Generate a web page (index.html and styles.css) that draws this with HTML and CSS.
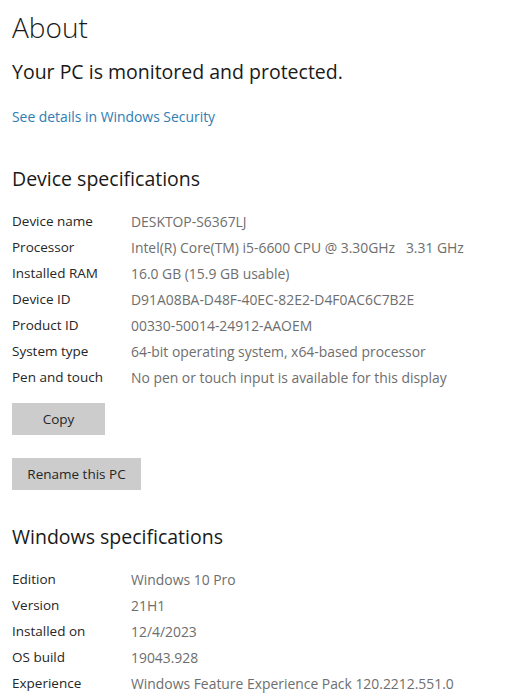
FILE: index.html
```html
<!DOCTYPE html>
<html>
<head>
<meta charset="utf-8">
<link rel="stylesheet" href="styles.css">
</head>
<body>
<main class="page">
  <h1 class="title">About</h1>
  <p class="status">Your PC is monitored and protected.</p>
  <a class="link" href="#">See details in Windows Security</a>

  <h2 class="section">Device specifications</h2>
  <dl class="specs">
    <div class="row"><dt>Device name</dt><dd>DESKTOP-S6367LJ</dd></div>
    <div class="row"><dt>Processor</dt><dd>Intel(R) Core(TM) i5-6600 CPU @ 3.30GHz&nbsp;&nbsp;&nbsp;3.31 GHz</dd></div>
    <div class="row"><dt>Installed RAM</dt><dd>16.0 GB (15.9 GB usable)</dd></div>
    <div class="row"><dt>Device ID</dt><dd>D91A08BA-D48F-40EC-82E2-D4F0AC6C7B2E</dd></div>
    <div class="row"><dt>Product ID</dt><dd>00330-50014-24912-AAOEM</dd></div>
    <div class="row"><dt>System type</dt><dd>64-bit operating system, x64-based processor</dd></div>
    <div class="row"><dt>Pen and touch</dt><dd>No pen or touch input is available for this display</dd></div>
  </dl>
  <div class="buttons">
    <button class="btn btn-copy">Copy</button>
    <button class="btn btn-rename">Rename this PC</button>
  </div>

  <h2 class="section section-win">Windows specifications</h2>
  <dl class="specs">
    <div class="row"><dt>Edition</dt><dd>Windows 10 Pro</dd></div>
    <div class="row"><dt>Version</dt><dd>21H1</dd></div>
    <div class="row"><dt>Installed on</dt><dd>12/4/2023</dd></div>
    <div class="row"><dt>OS build</dt><dd>19043.928</dd></div>
    <div class="row"><dt>Experience</dt><dd>Windows Feature Experience Pack 120.2212.551.0</dd></div>
  </dl>
</main>
</body>
</html>
```

FILE: styles.css
```css
html, body {
  margin: 0;
  padding: 0;
  background: #ffffff;
}
body {
  font-family: "Open Sans", "Noto Sans", sans-serif;
  color: #1f1f1f;
  overflow: hidden;
}
.page {
  padding: 9px 0 0 12px;
}
.title {
  margin: 0;
  font-size: 28px;
  font-weight: 300;
  line-height: 36px;
  color: #1a1a1a;
}
.status {
  margin: 16px 0 0;
  font-size: 19.5px;
  font-weight: 400;
  line-height: 22px;
  color: #1a1a1a;
}
.link {
  display: block;
  margin-top: 24px;
  font-size: 13.9px;
  line-height: 20px;
  color: #2f7db3;
  text-decoration: none;
}
.section {
  margin: 39px 0 0;
  font-size: 19.5px;
  font-weight: 400;
  line-height: 26px;
  color: #1a1a1a;
}
.specs {
  margin: 16px 0 0;
}
.row {
  display: flex;
  height: 26px;
  align-items: center;
  font-size: 13.5px;
}
.row dt {
  width: 119px;
  color: #262626;
}
.row dd {
  margin: 0;
  font-size: 13.9px;
  color: #6e6e6e;
}
.buttons {
  display: flex;
  flex-direction: column;
  align-items: flex-start;
  gap: 23px;
  margin-top: 13px;
}
.btn {
  font-family: inherit;
  font-size: 13.5px;
  color: #262626;
  background: #cccccc;
  border: none;
  height: 32px;
  padding: 0;
}
.btn-copy {
  width: 93px;
}
.btn-rename {
  width: 129px;
}
.section-win {
  margin-top: 34px;
}
```
